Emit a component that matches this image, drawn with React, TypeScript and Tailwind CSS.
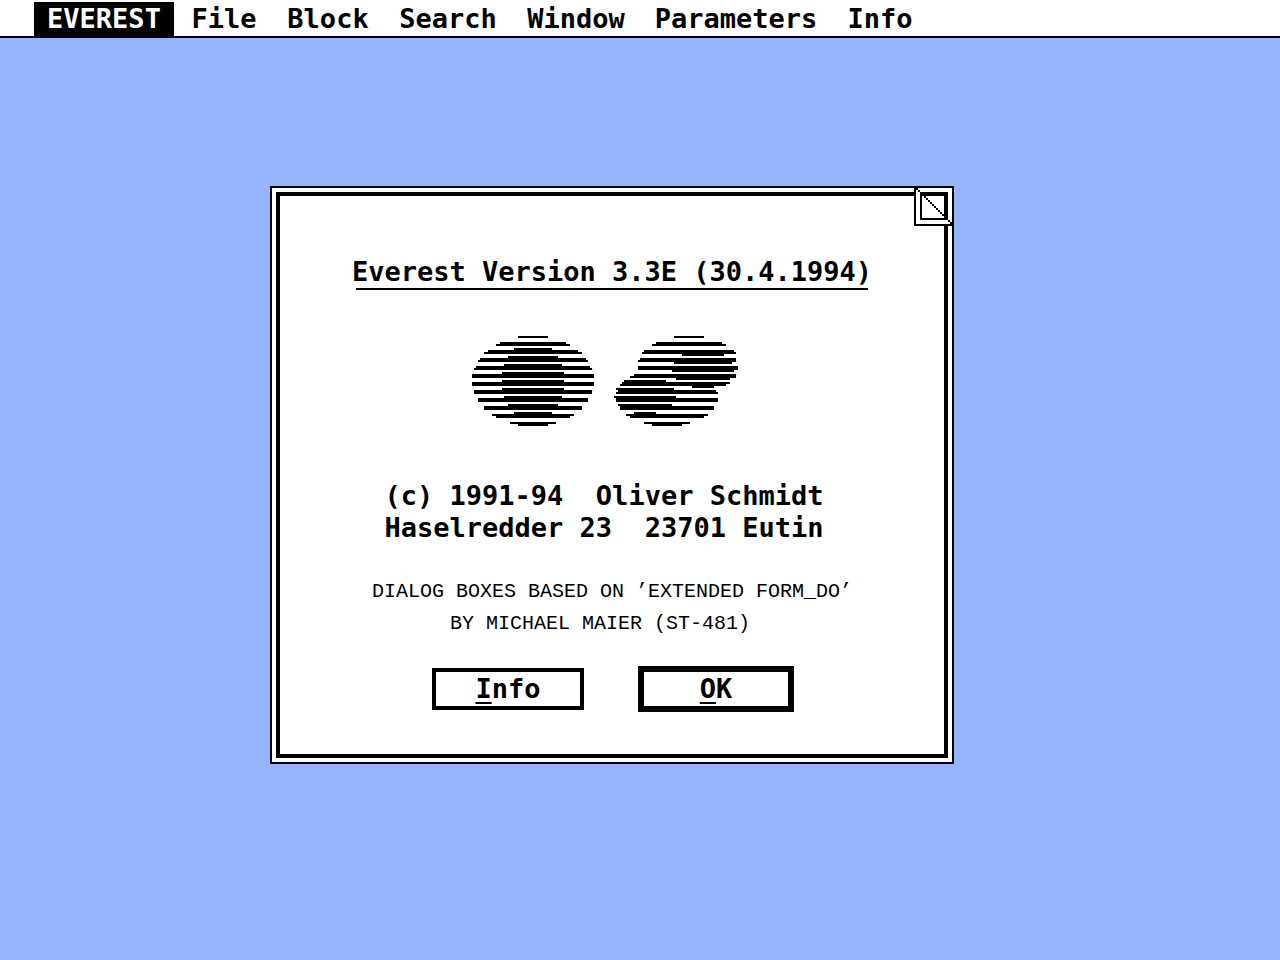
type Span = [row: number, from: number, to: number, height?: number];

const CELL_SPANS: Span[] = [
  [0, 24, 39],
  [3, 15, 48],
  [4, 13, 50],
  [6, 22, 41],
  [7, 9, 54],
  [8, 7, 56],
  [10, 19, 44],
  [11, 5, 58],
  [12, 4, 59],
  [14, 17, 46],
  [15, 3, 60],
  [16, 2, 61],
  [18, 16, 47],
  [19, 1, 62, 2],
  [22, 16, 47],
  [23, 1, 62, 2],
  [26, 16, 47],
  [27, 2, 61, 2],
  [30, 17, 46],
  [31, 4, 59, 2],
  [34, 19, 44],
  [35, 7, 56, 2],
  [38, 22, 41],
  [39, 11, 52],
  [40, 13, 50],
  [43, 20, 43],
  [44, 24, 39],
];

const DIVIDED_SPANS: Span[] = [
  [0, 102, 117],
  [3, 93, 126],
  [4, 91, 128],
  [7, 87, 132],
  [8, 86, 133],
  [9, 106, 127],
  [11, 85, 133],
  [12, 84, 133],
  [13, 102, 131],
  [15, 84, 134, 2],
  [17, 101, 132],
  [19, 82, 133],
  [20, 80, 133],
  [21, 103, 130],
  [22, 77, 98],
  [23, 76, 130],
  [24, 75, 128],
  [25, 111, 122],
  [26, 73, 102],
  [27, 74, 123],
  [28, 73, 124],
  [30, 72, 103],
  [31, 73, 124, 2],
  [34, 74, 101],
  [35, 75, 122, 2],
  [38, 82, 93],
  [39, 78, 119],
  [40, 80, 117],
  [43, 87, 110],
  [44, 91, 106],
];

function Logo() {
  return (
    <svg
      className="mt-[46px] mr-[14px] h-[90px] w-[270px]"
      viewBox="0 0 135 45"
      shapeRendering="crispEdges"
      aria-hidden="true"
    >
      {[...CELL_SPANS, ...DIVIDED_SPANS].map(([row, from, to, height = 1]) => (
        <rect key={`${row}-${from}`} x={from} y={row} width={to - from} height={height} />
      ))}
    </svg>
  );
}

function CornerIcon() {
  return (
    <svg className="h-10 w-10" viewBox="0 0 20 20" shapeRendering="crispEdges" aria-hidden="true">
      <rect width="20" height="20" fill="black" />
      <rect x="1" y="1" width="18" height="18" fill="white" />
      <rect x="3" y="3" width="14" height="14" fill="black" />
      <rect x="4" y="5" width="11" height="11" fill="white" />
      {Array.from({ length: 20 }, (_, i) => (
        <rect key={i} x={i} y={i} width="1" height="1" />
      ))}
    </svg>
  );
}

const MENUS = [
  { label: "File", width: "w-24" },
  { label: "Block", width: "w-28" },
  { label: "Search", width: "w-32" },
  { label: "Window", width: "w-32" },
  { label: "Parameters", width: "w-48" },
  { label: "Info", width: "w-24" },
];

export default function App() {
  return (
    <div className="min-h-screen bg-[#96b4ff] font-['DejaVu_Sans_Mono',monospace] text-[27px] leading-8 font-bold text-black">
      <nav className="flex h-[38px] border-b-2 border-black bg-white pt-[2px] pl-[34px]">
        <button className="mr-[2px] w-[140px] bg-black text-center text-white">EVEREST</button>
        {MENUS.map((menu) => (
          <button key={menu.label} className={`${menu.width} text-center`}>
            {menu.label}
          </button>
        ))}
      </nav>

      <main className="flex pt-[148px] pl-[270px]">
        <section
          role="dialog"
          aria-labelledby="about-title"
          className="relative w-[684px] border-2 border-black bg-white p-1"
        >
          <div className="flex flex-col items-center border-4 border-black pt-[60px] pb-[42px] whitespace-pre">
            <h1 id="about-title" className="flex w-[512px] justify-center border-b-2 border-black">
              Everest Version 3.3E (30.4.1994)
            </h1>
            <Logo />
            <p className="mt-[54px] pr-4">(c) 1991-94  Oliver Schmidt</p>
            <p className="pr-4">Haselredder 23  23701 Eutin</p>
            <div className="mt-8 flex flex-col items-center font-['Liberation_Mono',monospace] text-[20px] font-normal">
              <p>DIALOG BOXES BASED ON ’EXTENDED FORM_DO’</p>
              <p className="pr-6">BY MICHAEL MAIER (ST-481)</p>
            </div>
            <div className="mt-[26px] flex items-center gap-[54px] pl-[2px]">
              <button className="h-[42px] w-[152px] border-4 border-black">
                <span className="underline decoration-2 underline-offset-4 [text-decoration-skip-ink:none]">I</span>nfo
              </button>
              <button className="h-[46px] w-[156px] border-6 border-black">
                <span className="underline decoration-2 underline-offset-4 [text-decoration-skip-ink:none]">O</span>K
              </button>
            </div>
          </div>
          <button aria-label="Move dialog" className="absolute -top-[2px] -right-[2px]">
            <CornerIcon />
          </button>
        </section>
      </main>
    </div>
  );
}
